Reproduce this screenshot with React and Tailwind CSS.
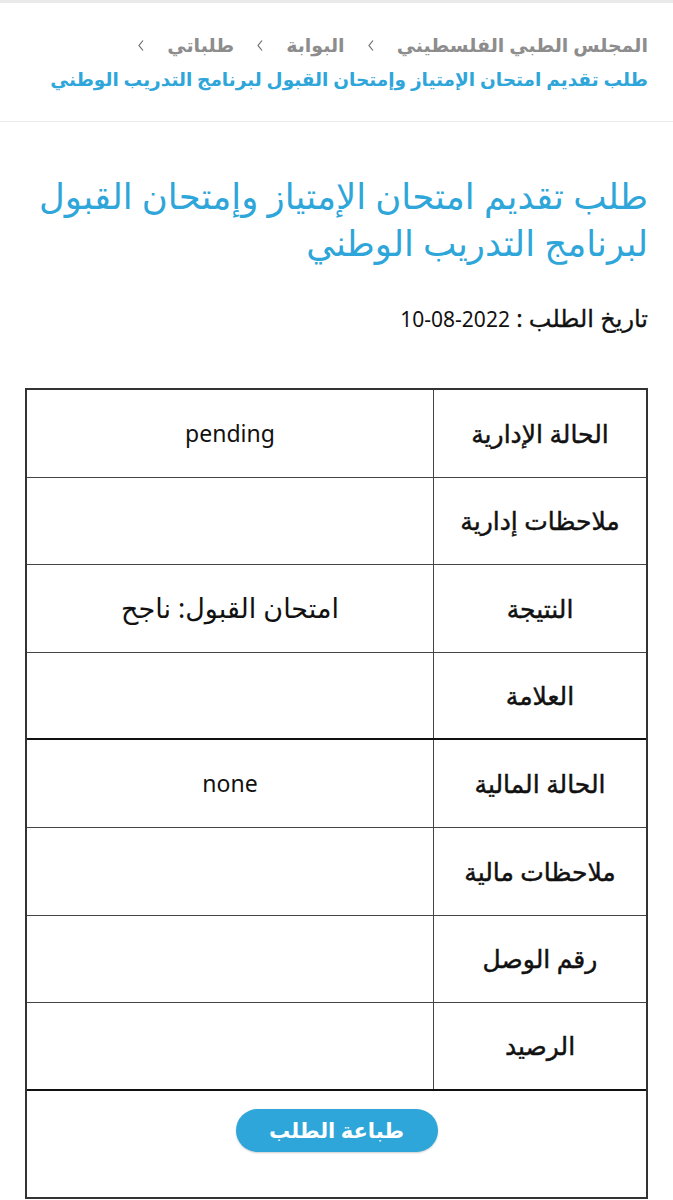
const rows = [
  { label: 'الحالة الإدارية', value: 'pending' },
  { label: 'ملاحظات إدارية', value: '' },
  { label: 'النتيجة', value: 'امتحان القبول: ناجح', ar: true },
  { label: 'العلامة', value: '', thick: true },
  { label: 'الحالة المالية', value: 'none' },
  { label: 'ملاحظات مالية', value: '' },
  { label: 'رقم الوصل', value: '' },
  { label: 'الرصيد', value: '', thick: true },
];

const Chevron = () => (
  <svg width="8" height="13" viewBox="0 0 8 13" className="mx-[22px] inline-block" fill="none">
    <path d="M6 1.5 L2 6.5 L6 11.5" stroke="#6b6b6b" strokeWidth="1.2" />
  </svg>
);

export default function App() {
  return (
    <div dir="rtl" className="min-h-[1200px] bg-white text-[#111] font-['Noto_Sans','DejaVu_Sans',sans-serif]">
      <div className="h-[3px] bg-[#e9e9e9]" />
      <header className="border-b border-[#ececec] px-[25px] pt-[25px] pb-[25px]">
        <nav className="flex items-center text-[19px] font-bold text-[#8d8d8d] leading-[34px]">
          <span>المجلس الطبي الفلسطيني</span>
          <Chevron />
          <span>البوابة</span>
          <Chevron />
          <span>طلباتي</span>
          <Chevron />
        </nav>
        <div className="text-[18.5px] font-bold text-[#2ea6d9] leading-[34px] whitespace-nowrap">
          طلب تقديم امتحان الإمتياز وإمتحان القبول لبرنامج التدريب الوطني
        </div>
      </header>

      <main className="px-[25px]">
        <h1 className="mt-[50px] text-[35.5px] leading-[47px] text-[#2ea6d9]">
          طلب تقديم امتحان الإمتياز وإمتحان القبول لبرنامج التدريب الوطني
        </h1>
        <p className="mt-[37px] text-[24px] leading-[30px] [-webkit-text-stroke:0.3px]">
          تاريخ الطلب : <span dir="ltr" className="inline-block text-[21px] [-webkit-text-stroke:0px]">10-08-2022</span>
        </p>

        <div className="mt-[54px] border-2 border-[#333]">
          {rows.map((r, i) => (
            <div
              key={i}
              className={`flex h-[87.6px] border-b ${r.thick ? 'border-b-2 border-[#111]' : 'border-[#444]'}`}
            >
              <div className="w-[213px] flex items-center justify-center border-l border-[#444] text-[25px] [-webkit-text-stroke:0.45px]">
                {r.label}
              </div>
              <div className={`flex-1 flex items-center justify-center ${r.ar ? 'text-[27px]' : 'text-[23px]'}`}>
                {r.value}
              </div>
            </div>
          ))}
          <div className="h-[106px] flex justify-center pt-[18px]">
            <button className="h-[43px] w-[202px] rounded-full bg-[#2ea6d9] text-white text-[21px] font-bold shadow-[0_1px_2px_rgba(0,0,0,0.2)]">
              طباعة الطلب
            </button>
          </div>
        </div>
      </main>
    </div>
  );
}
